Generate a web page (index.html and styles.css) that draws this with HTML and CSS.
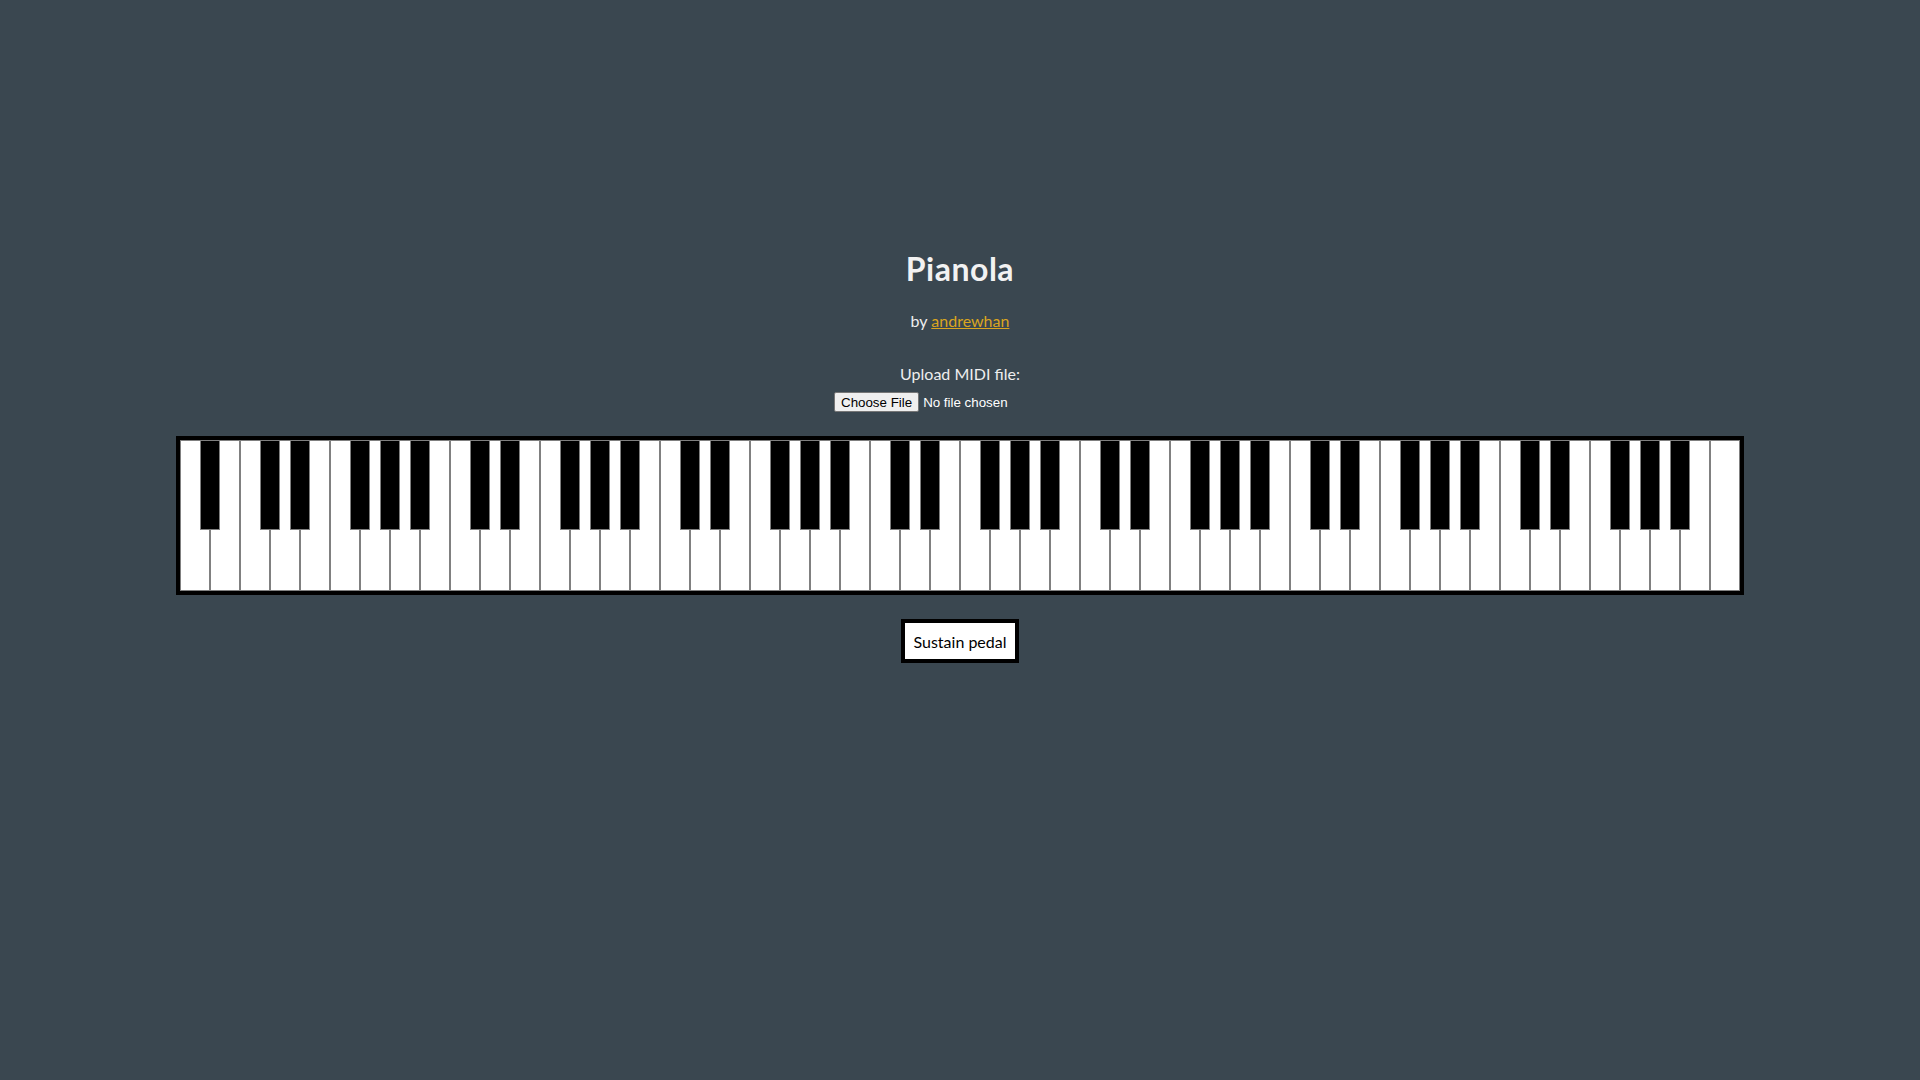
FILE: index.html
```html
<!DOCTYPE html>
<html lang="en">
<head>
<meta charset="utf-8">
<title>Pianola</title>
<link rel="stylesheet" href="styles.css">
</head>
<body>
<main class="app">
  <h1 class="title">Pianola</h1>
  <p class="byline">by <a class="author" href="#">andrewhan</a></p>
  <div class="upload">
    <label class="upload-label" for="midi">Upload MIDI file:</label>
    <input class="upload-input" id="midi" type="file" accept=".mid,.midi">
  </div>
  <div class="keyboard">
    <div class="wk"><div class="bk"></div></div><div class="wk"></div><div class="wk"><div class="bk"></div></div><div class="wk"><div class="bk"></div></div><div class="wk"></div><div class="wk"><div class="bk"></div></div><div class="wk"><div class="bk"></div></div>
    <div class="wk"><div class="bk"></div></div><div class="wk"></div><div class="wk"><div class="bk"></div></div><div class="wk"><div class="bk"></div></div><div class="wk"></div><div class="wk"><div class="bk"></div></div><div class="wk"><div class="bk"></div></div>
    <div class="wk"><div class="bk"></div></div><div class="wk"></div><div class="wk"><div class="bk"></div></div><div class="wk"><div class="bk"></div></div><div class="wk"></div><div class="wk"><div class="bk"></div></div><div class="wk"><div class="bk"></div></div>
    <div class="wk"><div class="bk"></div></div><div class="wk"></div><div class="wk"><div class="bk"></div></div><div class="wk"><div class="bk"></div></div><div class="wk"></div><div class="wk"><div class="bk"></div></div><div class="wk"><div class="bk"></div></div>
    <div class="wk"><div class="bk"></div></div><div class="wk"></div><div class="wk"><div class="bk"></div></div><div class="wk"><div class="bk"></div></div><div class="wk"></div><div class="wk"><div class="bk"></div></div><div class="wk"><div class="bk"></div></div>
    <div class="wk"><div class="bk"></div></div><div class="wk"></div><div class="wk"><div class="bk"></div></div><div class="wk"><div class="bk"></div></div><div class="wk"></div><div class="wk"><div class="bk"></div></div><div class="wk"><div class="bk"></div></div>
    <div class="wk"><div class="bk"></div></div><div class="wk"></div><div class="wk"><div class="bk"></div></div><div class="wk"><div class="bk"></div></div><div class="wk"></div><div class="wk"><div class="bk"></div></div><div class="wk"><div class="bk"></div></div>
    <div class="wk"><div class="bk"></div></div><div class="wk"></div><div class="wk"></div>
  </div>
  <button class="sustain" type="button">Sustain pedal</button>
</main>
</body>
</html>
```
FILE: styles.css
```css
html, body {
  margin: 0;
  padding: 0;
}

body {
  background: #3a4750;
  color: #eeeeee;
  font-family: Lato, "Open Sans", "Noto Sans", sans-serif;
  min-height: 100vh;
}

.app {
  display: flex;
  flex-direction: column;
  align-items: center;
  padding-top: 249px;
}

.title {
  margin: 0;
  font-size: 32px;
  line-height: 40px;
  font-weight: 700;
  letter-spacing: 0.5px;
  color: #f2f2f2;
}

.byline {
  margin: 22px 0 0;
  font-size: 16px;
  line-height: 20px;
}

.author {
  color: goldenrod;
  text-decoration: underline;
}

.upload {
  margin-top: 33px;
  display: flex;
  flex-direction: column;
  align-items: center;
}

.upload-label {
  font-size: 16px;
  line-height: 20px;
}

.upload-input {
  display: block;
  box-sizing: border-box;
  width: 252px;
  margin-top: 8px;
  padding: 0;
  font-family: "Liberation Sans", Arial, sans-serif;
  font-size: 13.333px;
  color: #ffffff;
}

.upload-input::file-selector-button {
  font-family: "Liberation Sans", Arial, sans-serif;
  font-size: 13.333px;
  background: #efefef;
  color: #000000;
  border: 1px solid #767676;
  border-radius: 2px;
  padding: 1px 6px;
  margin-right: 4px;
  height: 20px;
}

.keyboard {
  margin-top: 24px;
  display: flex;
  border: 4px solid #000000;
  background: #ffffff;
}

.wk {
  position: relative;
  box-sizing: border-box;
  width: 30px;
  height: 151px;
  background: #ffffff;
  border: 1px solid #808080;
}

.bk {
  position: absolute;
  z-index: 1;
  top: -1px;
  left: 19px;
  box-sizing: border-box;
  width: 20px;
  height: 90px;
  background: #000000;
  border: 1px solid #808080;
}

.sustain {
  margin-top: 24px;
  box-sizing: border-box;
  height: 44px;
  padding: 0 8px;
  background: #ffffff;
  color: #000000;
  border: 4px solid #000000;
  font-family: Lato, "Open Sans", "Noto Sans", sans-serif;
  font-size: 16px;
  cursor: pointer;
}
```
